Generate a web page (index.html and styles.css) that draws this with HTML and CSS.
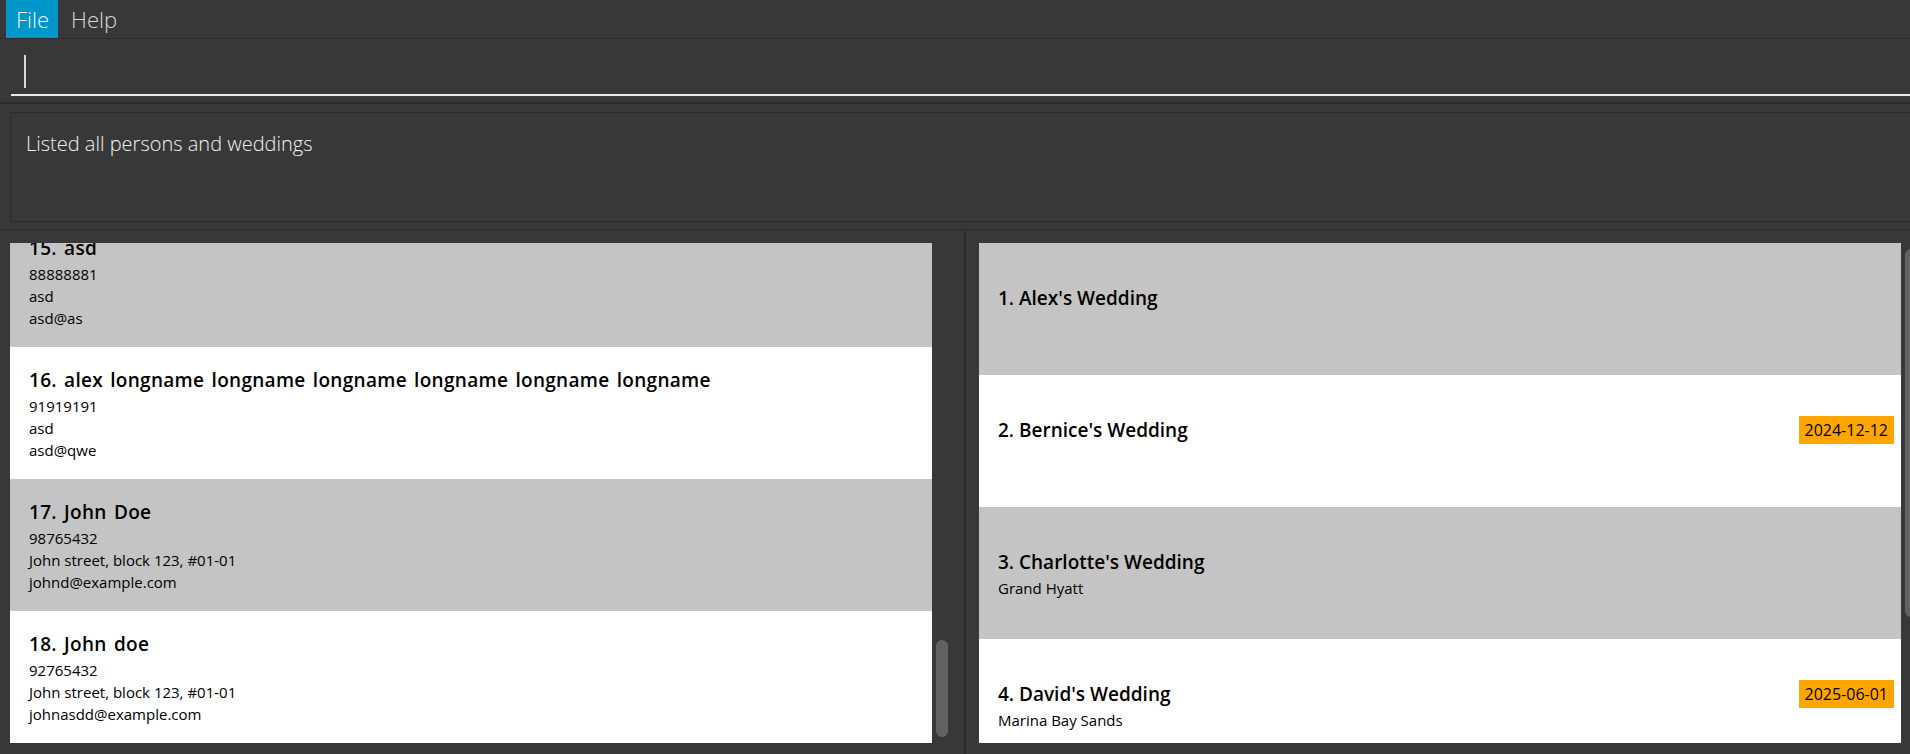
FILE: index.html
```html
<!DOCTYPE html>
<html lang="en">
<head>
<meta charset="utf-8">
<title>Address Book</title>
<link rel="stylesheet" href="styles.css">
</head>
<body>
<div class="app">
  <nav class="menubar">
    <span class="menu active">File</span>
    <span class="menu">Help</span>
  </nav>
  <section class="command">
    <div class="input"><span class="caret"></span></div>
  </section>
  <section class="result">
    <div class="result-box">Listed all persons and weddings</div>
  </section>
  <main class="lists">
    <div class="pane pane-left">
      <div class="viewport">
        <div class="list scrolled">
          <div class="card person gray">
            <div class="head"><span class="title">15. asd</span></div>
            <div class="line">88888881</div>
            <div class="line">asd</div>
            <div class="line">asd@as</div>
          </div>
          <div class="card person white">
            <div class="head"><span class="title">16. alex longname longname longname longname longname longname</span></div>
            <div class="line">91919191</div>
            <div class="line">asd</div>
            <div class="line">asd@qwe</div>
          </div>
          <div class="card person gray">
            <div class="head"><span class="title">17. John Doe</span></div>
            <div class="line">98765432</div>
            <div class="line">John street, block 123, #01-01</div>
            <div class="line">johnd@example.com</div>
          </div>
          <div class="card person white">
            <div class="head"><span class="title">18. John doe</span></div>
            <div class="line">92765432</div>
            <div class="line">John street, block 123, #01-01</div>
            <div class="line">johnasdd@example.com</div>
          </div>
        </div>
      </div>
      <div class="scrollbar"><div class="thumb" style="margin-top:397px;height:97px"></div></div>
    </div>
    <div class="divider"></div>
    <div class="pane pane-right">
      <div class="viewport">
        <div class="list">
          <div class="card wedding gray">
            <div class="head"><span class="title">1. Alex's Wedding</span></div>
          </div>
          <div class="card wedding white">
            <div class="head"><span class="title">2. Bernice's Wedding</span><span class="badge">2024-12-12</span></div>
          </div>
          <div class="card wedding gray">
            <div class="head"><span class="title">3. Charlotte's Wedding</span></div>
            <div class="line">Grand Hyatt</div>
          </div>
          <div class="card wedding white">
            <div class="head"><span class="title">4. David's Wedding</span><span class="badge">2025-06-01</span></div>
            <div class="line">Marina Bay Sands</div>
          </div>
        </div>
      </div>
      <div class="scrollbar"><div class="thumb" style="margin-top:6px;height:368px"></div></div>
    </div>
  </main>
</div>
</body>
</html>
```
FILE: styles.css
```css
* { box-sizing: border-box; }

html, body {
  margin: 0;
  padding: 0;
  width: 100%;
  height: 100%;
  overflow: hidden;
  background: #383838;
}

body {
  font-family: "Open Sans", "Noto Sans", "DejaVu Sans", sans-serif;
  color: #000;
}

.app {
  display: flex;
  flex-direction: column;
  height: 754px;
}

/* Menu bar */
.menubar {
  display: flex;
  height: 39px;
  padding-left: 6px;
  border-bottom: 1px solid #2c2c2c;
  background: #383838;
}

.menu {
  display: flex;
  align-items: center;
  height: 38px;
  padding: 0 12px 0 13px;
  font-size: 22px;
  font-weight: 300;
  color: #d8d8d8;
}

.menu.active {
  padding: 0 9px 0 10px;
  background: #0096c9;
  color: #f4f4f4;
}

/* Command box */
.command {
  height: 65px;
  padding: 15px 0 0 11px;
  border-bottom: 2px solid #2c2c2c;
}

.input {
  height: 42px;
  padding: 1px 0 0 13px;
  border-bottom: 2px solid #e8e8e8;
}

.caret {
  display: block;
  width: 2px;
  height: 33px;
  background: #d8d8d8;
}

/* Result display */
.result {
  height: 126px;
  padding: 8px 0 0 10px;
  border-bottom: 1px solid #2c2c2c;
}

.result-box {
  height: 110px;
  margin-right: -4px;
  padding: 17px 0 0 15px;
  border: 1px solid #2b2b2b;
  font-size: 20px;
  font-weight: 300;
  color: #f2f2f2;
}

/* Lists */
.lists {
  flex: 1;
  display: flex;
  min-height: 0;
}

.pane {
  display: flex;
  padding-top: 13px;
  height: 513px;
}

.pane-left {
  padding-left: 10px;
  width: 964px;
  flex: none;
}

.pane-right {
  padding-left: 13px;
  flex: none;
  width: 951px;
}

.divider {
  width: 2px;
  flex: none;
  background: #2c2c2c;
}

.viewport {
  width: 922px;
  height: 500px;
  overflow: hidden;
  flex: none;
}

.list.scrolled {
  margin-top: -28px;
}

.scrollbar {
  width: 12px;
  margin-left: 4px;
  height: 500px;
  flex: none;
}

.thumb {
  width: 12px;
  border-radius: 6px;
  background: #626262;
}

.card {
  height: 132px;
  padding: 19px 7px 0 19px;
}

.card.gray { background: #c4c4c4; }
.card.white { background: #ffffff; }

.card.wedding {
  padding-top: 41px;
}

.head {
  display: flex;
  align-items: center;
  justify-content: space-between;
  height: 28px;
  margin-bottom: 1px;
}

.title {
  font-size: 19px;
  font-weight: 600;
  white-space: nowrap;
}

.person .title {
  letter-spacing: 0.3px;
  word-spacing: 2px;
}

.line {
  font-size: 15px;
  line-height: 22px;
}

.badge {
  height: 28px;
  line-height: 28px;
  padding: 0 6px;
  background: #ffa500;
  font-size: 16px;
}
```
